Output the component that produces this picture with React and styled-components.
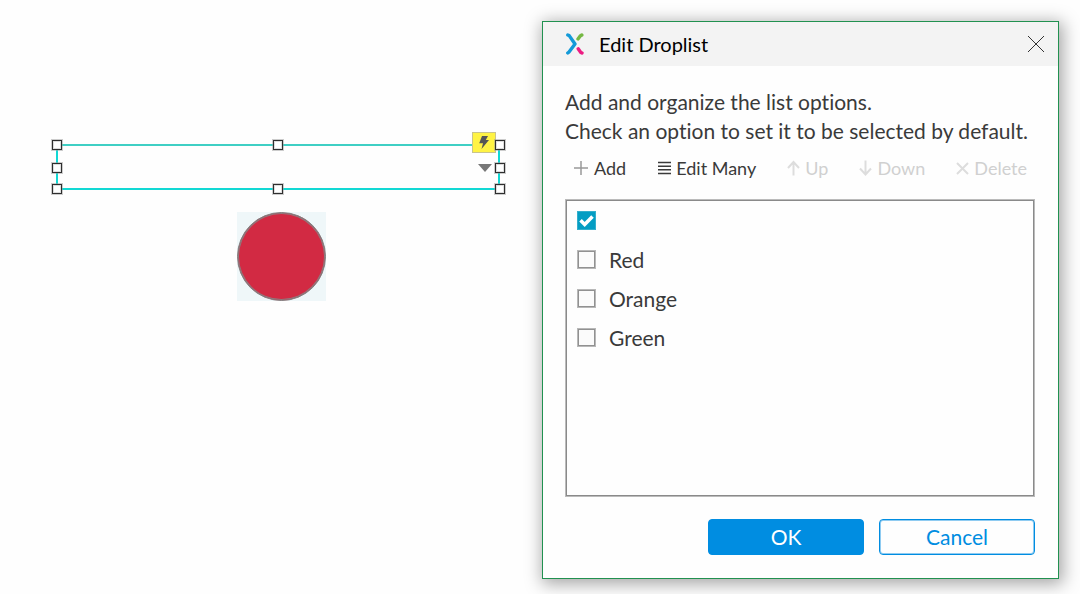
import React, { useState } from "react";
import styled, { createGlobalStyle } from "styled-components";

const GlobalStyle = createGlobalStyle`
  *, *::before, *::after { box-sizing: border-box; }
  body {
    margin: 0;
    background: #fefefe;
    font-family: Lato, "Liberation Sans", sans-serif;
    font-variant-ligatures: none;
    color: #3a3a3a;
  }
  button, select { font-family: inherit; }
`;

const Page = styled.main`
  display: grid;
  grid-template-columns: minmax(0, 1fr) minmax(0, 517px);
  align-items: start;
  min-height: 100vh;
  padding: 21px 21px 15px 0;
  overflow: hidden;
`;

const Canvas = styled.section`
  position: relative;
  align-self: stretch;
`;

const Droplist = styled.div`
  position: absolute;
  left: 56px;
  right: 42px;
  top: 123px;
  height: 46px;
`;

const DroplistSelect = styled.select`
  appearance: none;
  display: block;
  width: 100%;
  height: 100%;
  border: 2px solid #12d8d4;
  border-top-color: #3fcfc4;
  border-radius: 0;
  background: #fefefe;
  outline: none;
`;

const Caret = styled.svg`
  position: absolute;
  right: 8px;
  top: 20px;
`;

const Handle = styled.span`
  position: absolute;
  left: ${(p) => p.$x};
  top: ${(p) => p.$y};
  width: 10px;
  height: 10px;
  margin: -5px;
  border: 1px solid #2e2e2e;
  background: #fff;
  box-shadow: 0 0 0 1px #9a9a9a80, inset 0 0 0 1px #bbbbbb80;
`;

const EventBadge = styled.span`
  position: absolute;
  right: 4px;
  top: -12px;
  display: grid;
  place-items: center;
  width: 24px;
  height: 21px;
  border: 1px solid #c9c48c;
  background: #fff344;
`;

const Ball = styled.div`
  position: absolute;
  left: 237px;
  top: 191px;
  width: 89px;
  height: 89px;
  background: #eff7f9;

  &::before {
    content: "";
    display: block;
    height: 100%;
    border: 1px solid #7f8383;
    border-radius: 50%;
    background: #d22a43;
    box-shadow: inset 0 0 0 1px #8f7a7e;
  }
`;

const Dialog = styled.section`
  border: 1px solid #219150;
  background: #fefefe;
  box-shadow: 2px 3px 16px 2px #00000059;
`;

const TitleBar = styled.header`
  display: flex;
  align-items: center;
  height: 44px;
  padding: 0 13px 0 22px;
  background: #f3f3f3;
`;

const Title = styled.h1`
  flex: 1;
  margin: 0 0 0 14px;
  font-size: 20px;
  font-weight: 400;
  line-height: 24px;
  color: #000;
`;

const CloseButton = styled.button`
  display: grid;
  padding: 0;
  border: 0;
  background: none;
`;

const Body = styled.div`
  padding: 21px 23px 23px 22px;
`;

const Intro = styled.p`
  margin: 0;
  font-size: 21px;
  line-height: 29px;
  white-space: nowrap;
`;

const Toolbar = styled.div`
  display: flex;
  justify-content: space-between;
  padding: 11px 8px 19px;
`;

const Tool = styled.button`
  display: flex;
  align-items: center;
  gap: 5px;
  padding: 0;
  border: 0;
  background: none;
  font-size: 18px;
  line-height: 24px;
  color: #3a3a3a;

  &:disabled { color: #d0d0d0; }
`;

const Options = styled.ul`
  min-height: 298px;
  margin: 0;
  padding: 0 10px;
  border: 1px solid #bbb;
  box-shadow: inset 0 0 0 1px #8a8a8a;
  list-style: none;
`;

const Option = styled.li`
  display: flex;
  align-items: center;
  height: 39px;

  &:first-child { margin-top: 1px; }
`;

const OptionLabel = styled.label`
  display: flex;
  align-items: center;
  gap: 13px;
  padding-left: 1px;
  font-size: 21px;
  line-height: 29px;
`;

const CheckFrame = styled.span`
  position: relative;
  display: grid;

  svg { position: absolute; inset: 0; pointer-events: none; }
`;

const Check = styled.input`
  appearance: none;
  width: 19px;
  height: 19px;
  margin: 0;
  border: 1px solid #b8b8b8;
  background: #fbfbfb;
  box-shadow: inset 0 0 0 1px #919191;

  &:checked { border-color: #33afcc; background: #049dc3; box-shadow: none; }
`;

const Actions = styled.footer`
  display: flex;
  justify-content: flex-end;
  gap: 15px;
  margin-top: 22px;
`;

const ActionButton = styled.button`
  width: 156px;
  height: 36px;
  padding: 0 0 1px;
  border: 1px solid #008de1;
  border-radius: 4px;
  background: ${(p) => (p.$primary ? "#008de1" : "#fefefe")};
  box-shadow: inset 0 0 0 1px ${(p) => (p.$primary ? "#008de1" : "#8fcbf1")};
  color: ${(p) => (p.$primary ? "#fff" : "#008de1")};
  font-size: 21px;
  line-height: 29px;
`;

const handles = [
  ["1px", "1px"], ["50%", "1px"], ["100%", "1px"],
  ["1px", "24px"], ["100%", "24px"],
  ["1px", "45px"], ["50%", "45px"], ["100%", "45px"],
];

const Logo = () => (
  <svg width="20" height="22" viewBox="0 0 20 22" fill="none" strokeWidth="3.4" aria-hidden="true">
    <path d="M2.8 2 4.2 2.6 10 11 4 19 2.8 20" stroke="#139ad8" strokeLinecap="round" strokeLinejoin="round" />
    <path d="M13 6 15.2 3 16.8 2" stroke="#75b843" strokeLinecap="round" strokeLinejoin="round" />
    <path d="M13.2 15.8 15.8 19.4 17 20" stroke="#ec1c82" strokeLinecap="round" strokeLinejoin="round" />
  </svg>
);

const tools = [
  { label: "Add", w: 16, icon: <path d="M8 1v14M1 8h14" stroke="#999" strokeWidth="1.5" /> },
  { label: "Edit Many", w: 14, icon: <path d="M1 2.5h13M1 6.2h13M1 9.8h13M1 13.5h13" stroke="#3a3a3a" strokeWidth="1.6" /> },
  { label: "Up", w: 13, off: true, icon: <path d="M6.5 15.5V2M1 8l5.5-6L12 8" stroke="#ddd" strokeWidth="2" /> },
  { label: "Down", w: 13, off: true, icon: <path d="M6.5 .5V14M1 8.5l5.5 6 5.5-6" stroke="#ddd" strokeWidth="2" /> },
  { label: "Delete", w: 13, off: true, icon: <path d="m1 3 11 11M12 3 1 14" stroke="#ddd" strokeWidth="2" /> },
];

export default function App() {
  const [selected, setSelected] = useState("");
  const options = ["", "Red", "Orange", "Green"];
  return (
    <>
      <GlobalStyle />
      <Page>
        <Canvas aria-label="Canvas">
          <Droplist>
            <DroplistSelect aria-label="Color" value={selected} onChange={(e) => setSelected(e.target.value)}>
              {options.map((o) => <option key={o} value={o}>{o}</option>)}
            </DroplistSelect>
            <Caret width="14" height="8" viewBox="0 0 14 8" aria-hidden="true">
              <path d="M0 0h14L7 8z" fill="#777" />
            </Caret>
            <EventBadge>
              <svg width="12" height="15" viewBox="0 0 12 15" aria-hidden="true">
                <path d="M4 1h6L7.8 5H11L3.5 14 5 8.2H1.2z" fill="#555" />
              </svg>
            </EventBadge>
            {handles.map(([x, y]) => <Handle key={x + y} $x={x} $y={y} />)}
          </Droplist>
          <Ball />
        </Canvas>

        <Dialog role="dialog" aria-labelledby="dialog-title">
          <TitleBar>
            <Logo />
            <Title id="dialog-title">Edit Droplist</Title>
            <CloseButton aria-label="Close">
              <svg width="18" height="18" viewBox="0 0 18 18" aria-hidden="true">
                <path d="m1 1 16 16M17 1 1 17" stroke="#333" strokeWidth="1" />
              </svg>
            </CloseButton>
          </TitleBar>
          <Body>
            <Intro>
              Add and organize the list options.<br />
              Check an option to set it to be selected by default.
            </Intro>
            <Toolbar>
              {tools.map((t) => (
                <Tool key={t.label} disabled={t.off}>
                  <svg width={t.w} height="16" viewBox={`0 0 ${t.w} 16`} fill="none" aria-hidden="true">{t.icon}</svg>
                  {t.label}
                </Tool>
              ))}
            </Toolbar>
            <Options>
              {options.map((o) => (
                <Option key={o}>
                  <OptionLabel>
                    <CheckFrame>
                      <Check
                        type="checkbox"
                        aria-label={o || "Blank option"}
                        checked={selected === o}
                        onChange={() => setSelected(o)}
                      />
                      {selected === o && (
                        <svg width="19" height="19" viewBox="0 0 19 19" fill="none" aria-hidden="true">
                          <path d="m3.5 9.2 4.2 4.2 7.8-7.8" stroke="#fff" strokeWidth="3.6" />
                        </svg>
                      )}
                    </CheckFrame>
                    {o}
                  </OptionLabel>
                </Option>
              ))}
            </Options>
            <Actions>
              <ActionButton $primary>OK</ActionButton>
              <ActionButton>Cancel</ActionButton>
            </Actions>
          </Body>
        </Dialog>
      </Page>
    </>
  );
}
